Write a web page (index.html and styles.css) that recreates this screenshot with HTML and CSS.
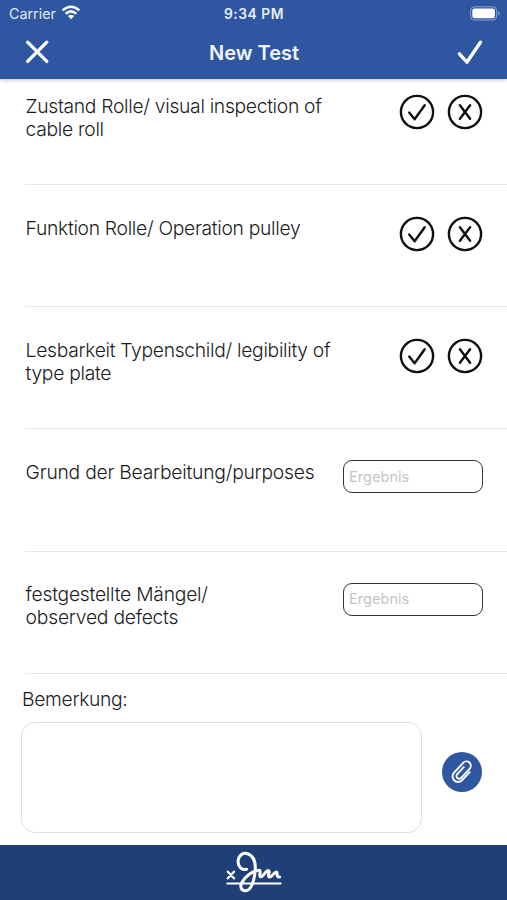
FILE: index.html
```html
<!DOCTYPE html>
<html lang="de">
<head>
<meta charset="utf-8">
<meta name="viewport" content="width=device-width, initial-scale=1">
<title>New Test</title>
<link rel="stylesheet" href="styles.css">
</head>
<body>
<svg class="defs" width="0" height="0" aria-hidden="true">
  <symbol id="pass" viewBox="0 0 36 36"><circle cx="18" cy="18" r="16.1"/><path d="M10.2 18.6 15.6 25.2 25.7 11.2"/></symbol>
  <symbol id="fail" viewBox="0 0 36 36"><circle cx="18" cy="18" r="16.1"/><path d="M12.9 11.2 23.1 24.8M23.1 11.2 12.9 24.8"/></symbol>
</svg>
<div class="app">
  <header class="header">
    <div class="status">
      <div class="carrier"><span>Carrier</span>
        <svg width="20" height="16" viewBox="0 0 20 16"><g fill="none" stroke="#fff" stroke-width="2.5"><path d="M1.7 5.4Q10-1.9 18.3 5.4"/><path d="M4.7 8.7Q10 4.1 15.3 8.7"/></g><path d="M6.9 11.1Q10 8.4 13.1 11.1L10 14.2Z" fill="#fff"/></svg>
      </div>
      <div class="time">9:34 PM</div>
      <svg class="battery" width="31" height="15" viewBox="0 0 31 15"><rect x=".6" y=".8" width="26" height="13.2" rx="3.8" fill="none" stroke="#8da5d1"/><rect x="2.3" y="2.5" width="22.6" height="9.8" rx="2.2" fill="#fff"/><path d="M28.2 5.1Q31.1 7.4 28.2 9.7Z" fill="#8da5d1"/></svg>
    </div>
    <div class="nav">
      <svg class="close" width="26" height="26" viewBox="0 0 26 26"><path d="M3.6 3.2 22.8 22.4M22.8 3.2 3.6 22.4"/></svg>
      <h1>New Test</h1>
      <svg class="done" width="28" height="28" viewBox="0 0 28 28"><path d="M3.4 16.8 10.9 25.2 24.5 5.2"/></svg>
    </div>
  </header>
  <main>
    <section class="row first"><p>Zustand Rolle/ visual inspection of<br>cable roll</p><div class="choices"><svg><use href="#pass"/></svg><svg><use href="#fail"/></svg></div></section>
    <section class="row"><p>Funktion Rolle/ Operation pulley</p><div class="choices"><svg><use href="#pass"/></svg><svg><use href="#fail"/></svg></div></section>
    <section class="row"><p>Lesbarkeit Typenschild/ legibility of<br>type plate</p><div class="choices"><svg><use href="#pass"/></svg><svg><use href="#fail"/></svg></div></section>
    <section class="row"><p class="looser">Grund der Bearbeitung/purposes</p><input placeholder="Ergebnis"></section>
    <section class="row"><p class="looser">festgestellte Mängel/<br>observed defects</p><input placeholder="Ergebnis"></section>
    <section class="remarks">
      <label for="note">Bemerkung:</label>
      <div class="note-line">
        <textarea id="note"></textarea>
        <div class="attach"><svg width="40" height="40" viewBox="0 0 40 40"><g transform="translate(20 19.8) rotate(43)"><path d="M5.9-5V6A5.6 5.6 0 0 1-5.3 6V-7.4A4.4 4.4 0 0 1 3.5-7.4V5A2.7 2.7 0 0 1-1.9 5V-4.6"/></g></svg></div>
      </div>
    </section>
  </main>
  <footer class="footer">
    <svg width="60" height="46" viewBox="224 849 60 46"><path class="cross" d="M227.8 871.7 234 878.3M234 871.7 227.8 878.3"/><path d="M227.3 883.5H280.7"/><path class="pen" d="M246.5 869.3C241.5 870.8 237.4 866 238.2 860.5C239 855 243.2 852.3 247.5 853.7C254.5 856 256.2 864.5 254.8 874C253.6 882 251.4 890.5 245.5 890.7C240.8 890.9 239.8 886 242 882.2C245 877 252 871 259 870.3C261.8 870.2 258.4 875.9 260.4 876.8C263 877.6 265.4 870.6 268.2 870.6C270.8 870.8 266.8 876.5 269.4 877C272 877.3 274 872 276.4 872C278.4 872.2 275.2 877 279.6 877"/></svg>
  </footer>
</div>
</body>
</html>
```
FILE: styles.css
```css
* { box-sizing: border-box; }
body { margin: 0; background: #fff; font-family: Inter, "Liberation Sans", sans-serif; color: #1c1c1c; }
.defs { display: block; }
.app { height: 900px; display: flex; flex-direction: column; overflow: hidden; }
.header { height: 79px; flex: none; background: #2f57a1; color: #fff; box-shadow: 0 1px 4px #0004; }
.status { height: 27px; display: grid; grid-template-columns: 1fr auto 1fr; align-items: center; padding: 0 6px 0 9px; }
.carrier { display: flex; align-items: center; gap: 5px; font-size: 14.3px; color: #e0e8f5; }
.carrier svg { margin-top: -1px; }
.time { font-size: 13.8px; font-weight: 600; letter-spacing: .55px; margin-right: 2px; color: #e8eef9; }
.battery { justify-self: end; }
.nav { height: 50px; display: grid; grid-template-columns: 1fr auto 1fr; align-items: center; padding: 0 23px 0 24px; }
.nav path { fill: none; stroke: #fff; stroke-width: 3.3; stroke-linecap: round; stroke-linejoin: round; }
.done { justify-self: end; margin-top: -2px; }
h1 { margin: 2px 0 0; font-size: 20px; font-weight: 600; line-height: 26px; color: #f1f5fc; }
main { flex: 1; }
.row { height: 122.2px; margin-left: 25px; padding: 31px 24px 0 1px; border-bottom: 1px solid #e8e8e8; display: flex; justify-content: space-between; align-items: flex-start; }
.row.first { height: 106px; padding-top: 15px; }
p { margin: .6px 0 0 -.4px; font-size: 19.3px; font-weight: 300; line-height: 23.3px; letter-spacing: -.31px; white-space: nowrap; }
.looser { letter-spacing: -.24px; }
.choices { display: flex; gap: 12px; }
.choices svg { width: 36px; height: 36px; fill: none; stroke: #101010; stroke-width: 2.4; stroke-linecap: round; stroke-linejoin: round; }
input { width: 140px; height: 33px; border: 1.5px solid #333; border-radius: 9px; background: #fff; padding: 0 5px 1px; font: 300 14.5px Inter, "Liberation Sans", sans-serif; letter-spacing: .05px; }
input::placeholder { color: #c4c4c4; opacity: 1; font-weight: 400; }
.remarks { padding: 13px 25px 0 21px; }
label { display: block; height: 35px; font-size: 19.3px; line-height: 24px; font-weight: 300; letter-spacing: -.33px; padding-left: 1px; }
.note-line { display: flex; justify-content: space-between; align-items: center; }
textarea { width: 401px; height: 111px; border: 1px solid #dedede; border-radius: 14px; resize: none; }
.attach { width: 40px; height: 40px; border-radius: 50%; background: #2f57a1; margin-top: -11px; }
.attach svg { display: block; }
.attach path { fill: none; stroke: #fff; stroke-width: 1.9; stroke-linecap: round; }
.footer { height: 55px; flex: none; background: #213f77; display: flex; justify-content: center; padding-top: 4px; }
.footer path { fill: none; stroke: #fff; stroke-width: 2.1; stroke-linecap: round; stroke-linejoin: round; }
.footer .cross { stroke-width: 2.4; }
.footer .pen { stroke-width: 3; }
```
